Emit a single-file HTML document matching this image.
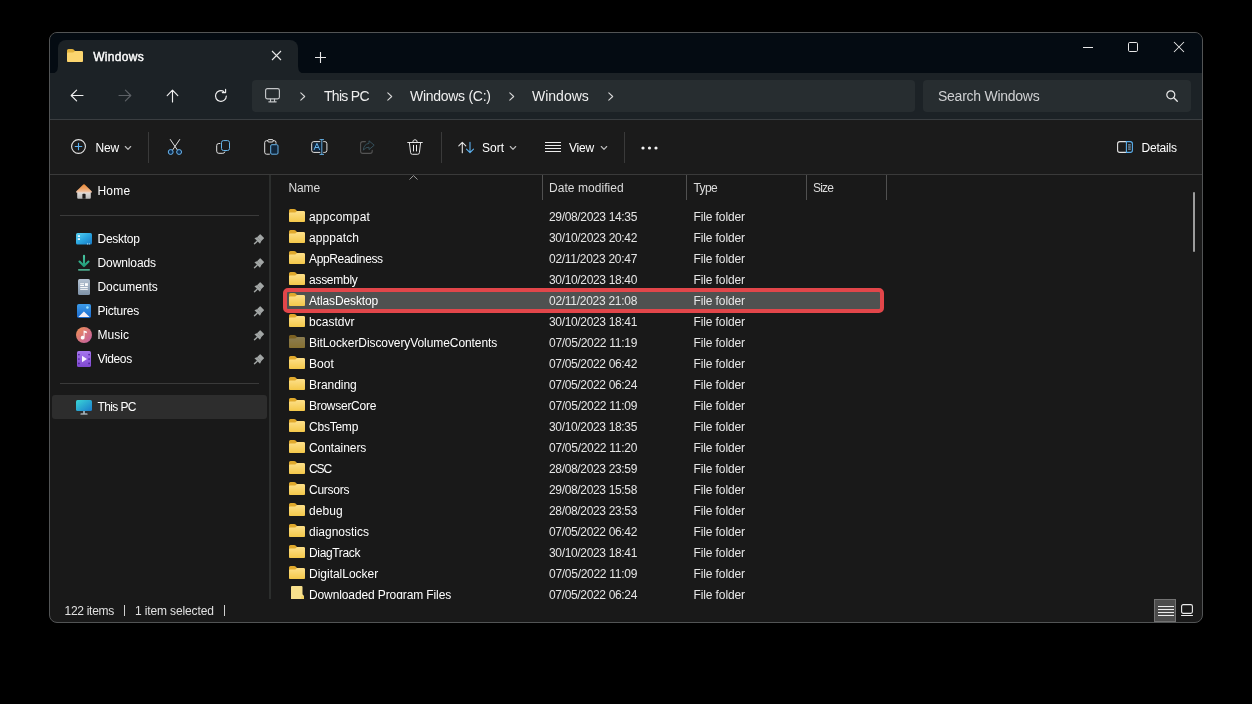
<!DOCTYPE html>
<html><head><meta charset="utf-8">
<style>
*{box-sizing:border-box;margin:0;padding:0}
html,body{width:1252px;height:704px;background:#000;overflow:hidden;font-family:"Liberation Sans",sans-serif;}
#win{position:absolute;left:49px;top:32px;width:1154px;height:591px;border:1px solid #525455;border-radius:8px;background:#191919;overflow:hidden}
#in{position:absolute;left:-50px;top:-33px;width:1252px;height:704px;will-change:transform}
.a{position:absolute}
.t{position:absolute;color:#fff;font-size:12px;white-space:nowrap;line-height:14px;height:14px}
svg{position:absolute;overflow:visible}
.row{position:absolute;left:0;height:21px;width:1252px}
</style></head><body>
<div id="win"><div id="in">
<!-- TITLE -->
<div class="a" style="left:50px;top:33px;width:1152px;height:41px;background:#040b12"></div>
<div class="a" style="left:58px;top:40px;width:240px;height:34px;background:#1c2226;border-radius:8px 8px 0 0"></div>

<!-- tab flare -->
<svg style="left:298px;top:66px" width="8" height="8"><path d="M0 8 L0 0 Q0 8 8 8 Z" fill="#1c2226"/></svg>
<svg style="left:50px;top:66px" width="8" height="8"><path d="M8 8 L8 0 Q8 8 0 8 Z" fill="#1c2226"/></svg>
<!-- tab folder icon -->
<svg style="left:67px;top:49px" width="16" height="13" viewBox="0 0 16 13"><path d="M0 1.5Q0 0 1.5 0H5.2Q6 0 6.6 .6L8 2H14.5Q16 2 16 3.5V11.5Q16 13 14.500 13H1.5Q0 13 0 11.5Z" fill="#e2b23c"/><path d="M0 4.500Q0 3.500 1 3.500H5.500Q6.300 3.500 6.900 3L8 2H14.500Q16 2 16 3.500V11.500Q16 13 14.500 13H1.500Q0 13 0 11.500Z" fill="#fbd56f"/></svg>
<div class="t" id="tabt" style="left:93.200px;top:50px;font-size:12px;-webkit-text-stroke:.4px #fff;letter-spacing:.3px">Windows</div>
<svg style="left:272px;top:51px" width="9" height="9" viewBox="0 0 9 9"><path d="M0 0L9 9M9 0L0 9" stroke="#e8e8e8" stroke-width="1.1" fill="none"/></svg>
<svg style="left:315px;top:52px" width="11" height="11" viewBox="0 0 11 11"><path d="M5.500 0V11M0 5.500H11" stroke="#e8e8e8" stroke-width="1.1" fill="none"/></svg>
<!-- window controls -->
<svg style="left:1083px;top:47px" width="10" height="1"><rect width="10" height="1" fill="#e8e8e8"/></svg>
<svg style="left:1128px;top:42px" width="10" height="10" viewBox="0 0 10 10"><rect x=".5" y=".5" width="9" height="9" rx="1.2" stroke="#e8e8e8" fill="none"/></svg>
<svg style="left:1174px;top:42px" width="10" height="10" viewBox="0 0 10 10"><path d="M0 0L10 10M10 0L0 10" stroke="#e8e8e8" stroke-width="1.05" fill="none"/></svg>
<!-- NAV -->
<div class="a" style="left:50px;top:73px;width:1152px;height:46px;background:#1c2226"></div>
<div class="a" style="left:50px;top:119px;width:1152px;height:1px;background:#3a3e41"></div>
<div class="a" style="left:252px;top:80px;width:663px;height:32px;background:#272d30;border-radius:4px"></div>
<div class="a" style="left:923px;top:80px;width:268px;height:32px;background:#272d30;border-radius:4px"></div>

<!-- nav icons -->
<svg style="left:70px;top:89px" width="14" height="13" viewBox="0 0 14 13"><path d="M13 6.500H1.400M6.600 1.200L1.200 6.500L6.600 11.800" stroke="#f0f0f0" stroke-width="1.15" fill="none" stroke-linecap="round" stroke-linejoin="round"/></svg>
<svg style="left:118px;top:89px" width="14" height="13" viewBox="0 0 14 13"><path d="M1 6.500H12.600M7.400 1.200L12.800 6.500L7.400 11.800" stroke="#5d6166" stroke-width="1.15" fill="none" stroke-linecap="round" stroke-linejoin="round"/></svg>
<svg style="left:166px;top:89px" width="13" height="14" viewBox="0 0 13 14"><path d="M6.500 13V1.400M1.200 6.600L6.500 1.200L11.800 6.600" stroke="#f0f0f0" stroke-width="1.15" fill="none" stroke-linecap="round" stroke-linejoin="round"/></svg>
<svg style="left:214px;top:89px" width="14" height="14" viewBox="0 0 14 14"><path d="M12.300 7A5.400 5.400 0 1 1 9.800 2.450" stroke="#f0f0f0" stroke-width="1.15" fill="none" stroke-linecap="round"/><path d="M8.300 3.600H11.600V.4" stroke="#f0f0f0" stroke-width="1.15" fill="none" stroke-linecap="round" stroke-linejoin="round"/></svg>
<!-- monitor -->
<svg style="left:265px;top:88px" width="15" height="15" viewBox="0 0 15 15"><rect x=".6" y=".6" width="13.800" height="10.300" rx="1.800" stroke="#c4c6c8" stroke-width="1.150" fill="none"/><path d="M5.500 11V13.500M9.500 11V13.500M3.800 13.800H11.200" stroke="#c4c6c8" stroke-width="1.150" fill="none" stroke-linecap="round"/></svg>
<svg class="chev" style="left:299.500px;top:92px" width="6" height="9" viewBox="0 0 6 9"><path d="M.8 .9L4.700 4.500L.8 8.100" stroke="#d8d8d8" stroke-width="1.100" fill="none" stroke-linecap="round" stroke-linejoin="round"/></svg>
<div class="t" id="bc1" style="left:324px;top:87.600px;font-size:14px;line-height:16px;height:16px;color:#efefef;letter-spacing:-0.71px">This PC</div>
<svg class="chev" style="left:386.500px;top:92px" width="6" height="9" viewBox="0 0 6 9"><path d="M.8 .9L4.700 4.500L.8 8.100" stroke="#d8d8d8" stroke-width="1.100" fill="none" stroke-linecap="round" stroke-linejoin="round"/></svg>
<div class="t" id="bc2" style="left:410px;top:87.600px;font-size:14px;line-height:16px;height:16px;color:#efefef;letter-spacing:-0.28px">Windows (C:)</div>
<svg class="chev" style="left:508.500px;top:92px" width="6" height="9" viewBox="0 0 6 9"><path d="M.8 .9L4.700 4.500L.8 8.100" stroke="#d8d8d8" stroke-width="1.100" fill="none" stroke-linecap="round" stroke-linejoin="round"/></svg>
<div class="t" id="bc3" style="left:532px;top:87.600px;font-size:14px;line-height:16px;height:16px;color:#efefef;letter-spacing:0.0px">Windows</div>
<svg class="chev" style="left:607.500px;top:92px" width="6" height="9" viewBox="0 0 6 9"><path d="M.8 .9L4.700 4.500L.8 8.100" stroke="#d8d8d8" stroke-width="1.100" fill="none" stroke-linecap="round" stroke-linejoin="round"/></svg>
<div class="t" id="srch" style="left:938px;top:87.600px;font-size:14px;line-height:16px;height:16px;color:#cfd0d2;letter-spacing:-0.26px">Search Windows</div>
<svg style="left:1166px;top:90px" width="12" height="12" viewBox="0 0 12 12"><circle cx="4.800" cy="4.800" r="4" stroke="#e8e8e8" stroke-width="1.200" fill="none"/><path d="M7.800 7.800L11.300 11.300" stroke="#e8e8e8" stroke-width="1.300" stroke-linecap="round"/></svg>
<!-- TOOLBAR -->
<div class="a" style="left:50px;top:120px;width:1152px;height:54px;background:#1b1b1b"></div>
<div class="a" style="left:50px;top:174px;width:1152px;height:1px;background:#3a3a3a"></div>

<!-- toolbar icons -->
<svg style="left:71px;top:139px" width="15" height="15" viewBox="0 0 15 15"><circle cx="7.500" cy="7.500" r="6.900" stroke="#e4e4e4" stroke-width="1.100" fill="none"/><path d="M7.500 4.200V10.800M4.200 7.500H10.800" stroke="#5cb0ee" stroke-width="1.100" stroke-linecap="round"/></svg>
<div class="t" id="tnew" style="left:95.500px;top:141px;letter-spacing:-0.17px">New</div>
<svg style="left:125px;top:145.600px" width="6" height="4" viewBox="0 0 6 4"><path d="M.3 .5L3 3.300L5.700 .5" stroke="#bcbcbc" stroke-width="1.150" fill="none" stroke-linecap="round" stroke-linejoin="round"/></svg>
<div class="a" style="left:148px;top:132px;width:1px;height:31px;background:#3a3a3a"></div>
<!-- cut -->
<svg style="left:167px;top:139px" width="16" height="16" viewBox="0 0 16 16"><path d="M3.300 .5L10.400 11M12.700 .5L5.600 11" stroke="#e4e4e4" stroke-width="1" fill="none" stroke-linecap="round"/><circle cx="3.700" cy="13" r="2.450" stroke="#6cb4ea" stroke-width="1" fill="#0a2e54"/><circle cx="12.100" cy="13" r="2.450" stroke="#6cb4ea" stroke-width="1" fill="#0a2e54"/></svg>
<!-- copy -->
<svg style="left:216px;top:140px" width="15" height="15" viewBox="0 0 15 15"><path d="M3.900 3.500H2.800Q.7 3.500 .7 5.600V11.200Q.7 13.300 2.800 13.300H6.800Q8.600 13.300 8.900 11.900" stroke="#e4e4e4" stroke-width="1" fill="none" stroke-linecap="round"/><rect x="5.500" y=".6" width="8" height="9.900" rx="2" stroke="#66b4e8" stroke-width="1" fill="none"/></svg>
<!-- paste -->
<svg style="left:263.500px;top:139px" width="15" height="16" viewBox="0 0 15 16"><path d="M5.400 15.200H2.600Q.7 15.200 .7 13.300V3.600Q.7 1.700 2.600 1.700H3.600M9.400 1.700H10.200Q12 1.700 12 3.500V4.400" stroke="#e4e4e4" stroke-width="1" fill="none" stroke-linecap="round"/><rect x="3.700" y=".6" width="5.600" height="2.400" rx="1.200" stroke="#e4e4e4" stroke-width="1" fill="none"/><rect x="6.700" y="5.700" width="7.300" height="9.500" rx="1.200" stroke="#66b2e8" stroke-width="1" fill="#10253a"/></svg>
<!-- rename -->
<svg style="left:310.500px;top:139px" width="17" height="16" viewBox="0 0 17 16"><rect x="1.800" y="3.600" width="8.400" height="8.800" rx="1.500" fill="#10243a"/><path d="M8.900 2.600H2.800Q.7 2.600 .7 4.700V11.300Q.7 13.400 2.800 13.400H8.900M12.700 2.600H13.800Q15.900 2.600 15.900 4.700V11.300Q15.900 13.400 13.800 13.400H12.700" stroke="#e4e4e4" stroke-width="1" fill="none" stroke-linecap="round"/><path d="M10.800 .7V15.300M9 .6H12.600M9 15.400H12.600" stroke="#66b2e8" stroke-width=".95" fill="none" stroke-linecap="round"/><path d="M3.200 10.600L5.900 4.400L8.600 10.600M4.200 8.500H7.600" stroke="#66b2e8" stroke-width="1" fill="none" stroke-linecap="round" stroke-linejoin="round"/></svg>
<!-- share (disabled) -->
<svg style="left:360px;top:139.500px" width="15" height="14" viewBox="0 0 15 14"><path d="M5.400 1.600H2.800Q.6 1.600 .6 3.800V11.200Q.6 13.400 2.800 13.400H10Q12.200 13.400 12.200 11.200V10.400" stroke="#545454" stroke-width="1.100" fill="none" stroke-linecap="round"/><path d="M9 .8L14.200 5.200L9 9.600V7.200Q5.200 7 3.400 10.200Q3.600 4.200 9 3.400Z" stroke="#36525e" stroke-width=".95" fill="none" stroke-linejoin="round"/></svg>
<!-- delete -->
<svg style="left:407px;top:139px" width="16" height="16" viewBox="0 0 16 16"><path d="M.7 3.500H15.300M5.700 3.300Q5.700 .7 8 .7Q10.300 .7 10.300 3.300M2.400 3.700L3.600 13.700Q3.800 15.300 5.400 15.300H10.600Q12.200 15.300 12.400 13.700L13.600 3.700" stroke="#e4e4e4" stroke-width="1" fill="none" stroke-linecap="round" stroke-linejoin="round"/><path d="M6.500 6.300V12M9.500 6.300V12" stroke="#f4f4f4" stroke-width="1" fill="none" stroke-linecap="round"/></svg>
<div class="a" style="left:441px;top:132px;width:1px;height:31px;background:#3a3a3a"></div>
<!-- sort -->
<svg style="left:458px;top:140.500px" width="16" height="13" viewBox="0 0 16 13"><path d="M4.300 11.800V1.500M.8 4.800L4.300 1.300L7.800 4.800" stroke="#e4e4e4" stroke-width="1.100" fill="none" stroke-linecap="round" stroke-linejoin="round"/><path d="M12 1.200V11.500M8.500 8.200L12 11.700L15.500 8.200" stroke="#5cb0ee" stroke-width="1.100" fill="none" stroke-linecap="round" stroke-linejoin="round"/></svg>
<div class="t" id="tsort" style="left:482px;top:141px;letter-spacing:-0.0px">Sort</div>
<svg style="left:510px;top:145.600px" width="6" height="4" viewBox="0 0 6 4"><path d="M.3 .5L3 3.300L5.700 .5" stroke="#bcbcbc" stroke-width="1.150" fill="none" stroke-linecap="round" stroke-linejoin="round"/></svg>
<!-- view -->
<svg style="left:545px;top:142px" width="16" height="11" viewBox="0 0 16 11"><path d="M0 .5H16M0 3.500H16M0 6.500H16M0 9.500H16" stroke="#ededed" stroke-width="1" fill="none"/></svg>
<div class="t" id="tview" style="left:569px;top:141px;letter-spacing:-0.2px">View</div>
<svg style="left:601px;top:145.600px" width="6" height="4" viewBox="0 0 6 4"><path d="M.3 .5L3 3.300L5.700 .5" stroke="#bcbcbc" stroke-width="1.150" fill="none" stroke-linecap="round" stroke-linejoin="round"/></svg>
<div class="a" style="left:624px;top:132px;width:1px;height:31px;background:#3a3a3a"></div>
<svg style="left:640.600px;top:146px" width="17" height="4" viewBox="0 0 17 4"><circle cx="2" cy="2" r="1.600" fill="#f2f2f2"/><circle cx="8.500" cy="2" r="1.600" fill="#f2f2f2"/><circle cx="15" cy="2" r="1.600" fill="#f2f2f2"/></svg>
<!-- details -->
<svg style="left:1117px;top:141px" width="16" height="12" viewBox="0 0 16 12"><path d="M9.400 .6H2.800Q.6 .6 .6 2.800V9.200Q.6 11.400 2.800 11.400H9.400" stroke="#e4e4e4" stroke-width="1.100" fill="none"/><path d="M9.400 .6H13.200Q15.400 .6 15.400 2.800V9.200Q15.400 11.400 13.200 11.400H9.400Z" stroke="#5cb0ee" stroke-width="1.100" fill="none"/><path d="M11.100 3.900H13.800M11.100 6H13.800M11.100 8.100H13.800" stroke="#a4d0f2" stroke-width=".9" fill="none"/></svg>
<div class="t" id="tdet" style="left:1141.500px;top:141px;letter-spacing:-0.21px">Details</div>

<!-- SIDEBAR -->
<div class="a" style="left:269px;top:175px;width:1.500px;height:424px;background:#2c2e2d"></div>
<div class="a" style="left:60px;top:215px;width:199px;height:1px;background:#3a3a3a"></div>
<div class="a" style="left:60px;top:383px;width:199px;height:1px;background:#3a3a3a"></div>
<div class="a" style="left:52px;top:395px;width:215px;height:24px;background:#2d2d2d;border-radius:3px"></div>
<!-- home -->
<svg style="left:76px;top:184px" width="16" height="15" viewBox="0 0 16 15"><defs><linearGradient id="gh" x1="0" y1="0" x2="0" y2="1"><stop offset="0" stop-color="#e88a38"/><stop offset=".55" stop-color="#eea468"/><stop offset="1" stop-color="#f0cdb8"/></linearGradient><linearGradient id="gw" x1="0" y1="0" x2="0" y2="1"><stop offset="0" stop-color="#e6e2e0"/><stop offset="1" stop-color="#b8b8b8"/></linearGradient></defs><path d="M1.200 7.500H14.800V13.800Q14.800 14.800 13.800 14.800H2.200Q1.200 14.800 1.200 13.800Z" fill="url(#gw)"/><path d="M6.400 14.800V10.600Q6.400 9.800 7.200 9.800H8.800Q9.600 9.800 9.600 10.600V14.800Z" fill="#1e1c1c"/><path d="M.3 7.200L7.300 .5Q8 0 8.700 .5L15.700 7.200Q16.200 7.900 15.600 8.500Q15.200 8.800 14.600 8.600H1.400Q.8 8.800 .4 8.500Q-.2 7.900 .3 7.200Z" fill="url(#gh)"/></svg>
<div class="t" id="s0" style="left:97.500px;top:184px;letter-spacing:0.2px">Home</div>
<!-- desktop -->
<svg style="left:76px;top:233px" width="16" height="12" viewBox="0 0 16 12"><defs><linearGradient id="gd" x1="0" y1="0" x2="1" y2="1"><stop offset="0" stop-color="#58d2f2"/><stop offset=".5" stop-color="#2aa6e0"/><stop offset="1" stop-color="#1878c4"/></linearGradient></defs><rect width="16" height="11.600" rx="1.500" fill="url(#gd)"/><rect x="1.800" y="2.200" width="2.200" height="1.800" fill="#e4f8ff"/><rect x="1.800" y="5.200" width="2.200" height="1.800" fill="#e4f8ff"/><rect x="11" y="10.400" width="1" height="1" fill="#bfe8fa"/><rect x="12.800" y="10.400" width="1" height="1" fill="#bfe8fa"/></svg>
<div class="t" id="s1" style="left:97.500px;top:232px;letter-spacing:-0.28px">Desktop</div>
<!-- downloads -->
<svg style="left:78px;top:255px" width="12" height="16" viewBox="0 0 12 16"><defs><linearGradient id="gdl" x1="0" y1="0" x2="0" y2="1"><stop offset="0" stop-color="#48c4a0"/><stop offset="1" stop-color="#1f9c78"/></linearGradient></defs><path d="M6 .9V10.400M1.500 6.600L6 11.100L10.500 6.600" stroke="url(#gdl)" stroke-width="2.100" fill="none" stroke-linecap="round" stroke-linejoin="round"/><rect x="0" y="14" width="12" height="1.800" rx=".8" fill="#4aa88a"/></svg>
<div class="t" id="s2" style="left:97.500px;top:256px;letter-spacing:-0.1px">Downloads</div>
<!-- documents -->
<svg style="left:78px;top:279px" width="12" height="16" viewBox="0 0 12 16"><defs><linearGradient id="gdoc" x1="0" y1="0" x2="0" y2="1"><stop offset="0" stop-color="#b4c2d2"/><stop offset="1" stop-color="#7e92a8"/></linearGradient></defs><rect width="12" height="16" rx="1.500" fill="url(#gdoc)"/><path d="M2.200 4.800H6M2.200 6.500H6M2.200 8.400H9.800M2.200 10.300H9.800" stroke="#fff" stroke-width="1"/><rect x="7" y="4.200" width="2.900" height="2.700" fill="#fff"/></svg>
<div class="t" id="s3" style="left:97.500px;top:280px;letter-spacing:-0.06px">Documents</div>
<!-- pictures -->
<svg style="left:77px;top:304px" width="14" height="14" viewBox="0 0 14 14"><defs><linearGradient id="gp" x1="0" y1="0" x2="0" y2="1"><stop offset="0" stop-color="#3c9cea"/><stop offset="1" stop-color="#1a68cc"/></linearGradient></defs><rect width="14" height="14" rx="1.800" fill="url(#gp)"/><circle cx="10.400" cy="3.500" r="1.250" fill="#9fe4ff"/><path d="M1.400 13L6.900 7.600L12.600 13Z" fill="#f4eef6"/></svg>
<div class="t" id="s4" style="left:97.500px;top:304px;letter-spacing:-0.23px">Pictures</div>
<!-- music -->
<svg style="left:76px;top:327px" width="16" height="16" viewBox="0 0 16 16"><defs><linearGradient id="gm" x1="0" y1="0" x2="1" y2="1"><stop offset="0" stop-color="#f09050"/><stop offset="1" stop-color="#c05ca8"/></linearGradient></defs><circle cx="8" cy="8" r="8" fill="url(#gm)"/><path d="M7.600 3.600L10.800 4.600V6.200L8.600 5.600V10.600A1.900 1.900 0 1 1 7.600 9Z" fill="#fff"/></svg>
<div class="t" id="s5" style="left:97.500px;top:328px;letter-spacing:0.03px">Music</div>
<!-- videos -->
<svg style="left:77px;top:351px" width="14" height="16" viewBox="0 0 14 16"><defs><linearGradient id="gv" x1="0" y1="0" x2="0" y2="1"><stop offset="0" stop-color="#a676ee"/><stop offset="1" stop-color="#8048d0"/></linearGradient></defs><rect width="14" height="16" rx="1.600" fill="url(#gv)"/><path d="M5 4.800L10 8L5 11.200Z" fill="#f6f0ff"/><circle cx="1.9" cy="3.6" r=".85" fill="#4c249a"/><circle cx="1.9" cy="8" r=".85" fill="#4c249a"/><circle cx="1.9" cy="12.4" r=".85" fill="#4c249a"/><circle cx="12.1" cy="3.6" r=".85" fill="#4c249a"/><circle cx="12.1" cy="8" r=".85" fill="#4c249a"/><circle cx="12.1" cy="12.4" r=".85" fill="#4c249a"/></svg>
<div class="t" id="s6" style="left:97.500px;top:352px;letter-spacing:-0.36px">Videos</div>
<!-- this pc -->
<svg style="left:76px;top:400px" width="16" height="15" viewBox="0 0 16 15"><defs><linearGradient id="gpc" x1="0" y1="0" x2="1" y2="1"><stop offset="0" stop-color="#3ad6d6"/><stop offset="1" stop-color="#1a7ccc"/></linearGradient></defs><rect width="16" height="11" rx="1.500" fill="url(#gpc)"/><rect x="7.300" y="11" width="1.400" height="2.600" fill="#b8d4e6"/><rect x="4.400" y="13.400" width="7.200" height="1.200" rx=".6" fill="#dfe9f0"/></svg>
<div class="t" id="s7" style="left:97.500px;top:400px;letter-spacing:-0.61px">This PC</div>
<!-- pins -->
<svg style="left:253px;top:233.5px" width="12" height="13" viewBox="0 0 12 13"><g transform="translate(4.500,6.800) rotate(45)" fill="#a2a6a5"><rect x="-2.900" y="-6.700" width="5.800" height="4.400" rx=".6"/><path d="M-2.900 -2.600L-3.900 0.400H3.900L2.900 -2.600Z"/><rect x="-.7" y="0" width="1.400" height="4.800" rx=".5"/></g></svg>
<svg style="left:253px;top:257.5px" width="12" height="13" viewBox="0 0 12 13"><g transform="translate(4.500,6.800) rotate(45)" fill="#a2a6a5"><rect x="-2.900" y="-6.700" width="5.800" height="4.400" rx=".6"/><path d="M-2.900 -2.600L-3.900 0.400H3.900L2.900 -2.600Z"/><rect x="-.7" y="0" width="1.400" height="4.800" rx=".5"/></g></svg>
<svg style="left:253px;top:281.5px" width="12" height="13" viewBox="0 0 12 13"><g transform="translate(4.500,6.800) rotate(45)" fill="#a2a6a5"><rect x="-2.900" y="-6.700" width="5.800" height="4.400" rx=".6"/><path d="M-2.900 -2.600L-3.900 0.400H3.900L2.900 -2.600Z"/><rect x="-.7" y="0" width="1.400" height="4.800" rx=".5"/></g></svg>
<svg style="left:253px;top:305.5px" width="12" height="13" viewBox="0 0 12 13"><g transform="translate(4.500,6.800) rotate(45)" fill="#a2a6a5"><rect x="-2.900" y="-6.700" width="5.800" height="4.400" rx=".6"/><path d="M-2.900 -2.600L-3.900 0.400H3.900L2.900 -2.600Z"/><rect x="-.7" y="0" width="1.400" height="4.800" rx=".5"/></g></svg>
<svg style="left:253px;top:329.5px" width="12" height="13" viewBox="0 0 12 13"><g transform="translate(4.500,6.800) rotate(45)" fill="#a2a6a5"><rect x="-2.900" y="-6.700" width="5.800" height="4.400" rx=".6"/><path d="M-2.900 -2.600L-3.900 0.400H3.900L2.900 -2.600Z"/><rect x="-.7" y="0" width="1.400" height="4.800" rx=".5"/></g></svg>
<svg style="left:253px;top:353.5px" width="12" height="13" viewBox="0 0 12 13"><g transform="translate(4.500,6.800) rotate(45)" fill="#a2a6a5"><rect x="-2.900" y="-6.700" width="5.800" height="4.400" rx=".6"/><path d="M-2.900 -2.600L-3.900 0.400H3.900L2.900 -2.600Z"/><rect x="-.7" y="0" width="1.400" height="4.800" rx=".5"/></g></svg>

<!-- FILE LIST -->
<svg width="0" height="0" style="left:0;top:0"><defs><linearGradient id="gf" x1="0" y1="0" x2="0" y2="1"><stop offset="0" stop-color="#fde08a"/><stop offset="1" stop-color="#f4c84a"/></linearGradient></defs></svg>
<div id="list" class="a" style="left:270px;top:175px;width:932px;height:424px;overflow:hidden"><div class="a" style="left:-270px;top:-175px;width:1252px;height:704px">
<div class="t" id="h0" style="left:288.500px;top:181px;color:#dcdcdc;letter-spacing:-0.13px">Name</div>
<div class="t" id="h1" style="left:549px;top:181px;color:#dcdcdc;letter-spacing:0.05px">Date modified</div>
<div class="t" id="h2" style="left:693.500px;top:181px;color:#dcdcdc;letter-spacing:-0.63px">Type</div>
<div class="t" id="h3" style="left:813px;top:181px;color:#dcdcdc;letter-spacing:-0.84px">Size</div>
<svg style="left:408.500px;top:175px" width="9" height="5" viewBox="0 0 9 5"><path d="M.5 4.500L4.500 .6L8.500 4.500" stroke="#9a9a9a" stroke-width="1" fill="none"/></svg>
<div class="a" style="left:542px;top:175px;width:1px;height:25px;background:#505050"></div>
<div class="a" style="left:686px;top:175px;width:1px;height:25px;background:#505050"></div>
<div class="a" style="left:806px;top:175px;width:1px;height:25px;background:#505050"></div>
<div class="a" style="left:886px;top:175px;width:1px;height:25px;background:#505050"></div>
<div class="a" style="left:283px;top:288px;width:601px;height:25px;border:4px solid #e2464a;border-radius:5px;background:#4f5150"></div>
<svg style="left:289px;top:209px" width="16" height="13" viewBox="0 0 16 13"><path d="M0 1.500Q0 0 1.500 0H5.200Q6 0 6.600 .6L8 2H14.500Q16 2 16 3.500V11.500Q16 13 14.500 13H1.500Q0 13 0 11.500Z" fill="#e0a92c"/><path d="M0 4.500Q0 3.500 1 3.500H5.500Q6.300 3.500 6.900 3L8 2H14.500Q16 2 16 3.500V11.500Q16 13 14.500 13H1.500Q0 13 0 11.500Z" fill="url(#gf)"/></svg>
<div class="t" id="n0" style="left:309px;top:210px;letter-spacing:0.18px">appcompat</div><div class="t" id="d0" style="left:549px;top:210px;color:#e6e6e6;letter-spacing:-0.34px">29/08/2023 14:35</div><div class="t" id="f0" style="left:693.500px;top:210px;color:#e6e6e6;letter-spacing:-0.11px">File folder</div>
<svg style="left:289px;top:230px" width="16" height="13" viewBox="0 0 16 13"><path d="M0 1.500Q0 0 1.500 0H5.200Q6 0 6.600 .6L8 2H14.500Q16 2 16 3.500V11.500Q16 13 14.500 13H1.500Q0 13 0 11.500Z" fill="#e0a92c"/><path d="M0 4.500Q0 3.500 1 3.500H5.500Q6.300 3.500 6.900 3L8 2H14.500Q16 2 16 3.500V11.500Q16 13 14.500 13H1.500Q0 13 0 11.500Z" fill="url(#gf)"/></svg>
<div class="t" id="n1" style="left:309px;top:231px;letter-spacing:0.08px">apppatch</div><div class="t" id="d1" style="left:549px;top:231px;color:#e6e6e6;letter-spacing:-0.34px">30/10/2023 20:42</div><div class="t" id="f1" style="left:693.500px;top:231px;color:#e6e6e6;letter-spacing:-0.11px">File folder</div>
<svg style="left:289px;top:251px" width="16" height="13" viewBox="0 0 16 13"><path d="M0 1.500Q0 0 1.500 0H5.200Q6 0 6.600 .6L8 2H14.500Q16 2 16 3.500V11.500Q16 13 14.500 13H1.500Q0 13 0 11.500Z" fill="#e0a92c"/><path d="M0 4.500Q0 3.500 1 3.500H5.500Q6.300 3.500 6.900 3L8 2H14.500Q16 2 16 3.500V11.500Q16 13 14.500 13H1.500Q0 13 0 11.500Z" fill="url(#gf)"/></svg>
<div class="t" id="n2" style="left:309px;top:252px;letter-spacing:-0.36px">AppReadiness</div><div class="t" id="d2" style="left:549px;top:252px;color:#e6e6e6;letter-spacing:-0.28px">02/11/2023 20:47</div><div class="t" id="f2" style="left:693.500px;top:252px;color:#e6e6e6;letter-spacing:-0.11px">File folder</div>
<svg style="left:289px;top:272px" width="16" height="13" viewBox="0 0 16 13"><path d="M0 1.500Q0 0 1.500 0H5.200Q6 0 6.600 .6L8 2H14.500Q16 2 16 3.500V11.500Q16 13 14.500 13H1.500Q0 13 0 11.500Z" fill="#e0a92c"/><path d="M0 4.500Q0 3.500 1 3.500H5.500Q6.300 3.500 6.900 3L8 2H14.500Q16 2 16 3.500V11.500Q16 13 14.500 13H1.500Q0 13 0 11.500Z" fill="url(#gf)"/></svg>
<div class="t" id="n3" style="left:309px;top:273px;letter-spacing:-0.27px">assembly</div><div class="t" id="d3" style="left:549px;top:273px;color:#e6e6e6;letter-spacing:-0.34px">30/10/2023 18:40</div><div class="t" id="f3" style="left:693.500px;top:273px;color:#e6e6e6;letter-spacing:-0.11px">File folder</div>
<svg style="left:289px;top:293px" width="16" height="13" viewBox="0 0 16 13"><path d="M0 1.500Q0 0 1.500 0H5.200Q6 0 6.600 .6L8 2H14.500Q16 2 16 3.500V11.500Q16 13 14.500 13H1.500Q0 13 0 11.500Z" fill="#e0a92c"/><path d="M0 4.500Q0 3.500 1 3.500H5.500Q6.300 3.500 6.900 3L8 2H14.500Q16 2 16 3.500V11.500Q16 13 14.500 13H1.500Q0 13 0 11.500Z" fill="url(#gf)"/></svg>
<div class="t" id="n4" style="left:309px;top:294px;letter-spacing:-0.14px">AtlasDesktop</div><div class="t" id="d4" style="left:549px;top:294px;color:#e6e6e6;letter-spacing:-0.28px">02/11/2023 21:08</div><div class="t" id="f4" style="left:693.500px;top:294px;color:#e6e6e6;letter-spacing:-0.11px">File folder</div>
<svg style="left:289px;top:314px" width="16" height="13" viewBox="0 0 16 13"><path d="M0 1.500Q0 0 1.500 0H5.200Q6 0 6.600 .6L8 2H14.500Q16 2 16 3.500V11.500Q16 13 14.500 13H1.500Q0 13 0 11.500Z" fill="#e0a92c"/><path d="M0 4.500Q0 3.500 1 3.500H5.500Q6.300 3.500 6.900 3L8 2H14.500Q16 2 16 3.500V11.500Q16 13 14.500 13H1.500Q0 13 0 11.500Z" fill="url(#gf)"/></svg>
<div class="t" id="n5" style="left:309px;top:315px;letter-spacing:0.01px">bcastdvr</div><div class="t" id="d5" style="left:549px;top:315px;color:#e6e6e6;letter-spacing:-0.34px">30/10/2023 18:41</div><div class="t" id="f5" style="left:693.500px;top:315px;color:#e6e6e6;letter-spacing:-0.11px">File folder</div>
<svg style="left:289px;top:335px" width="16" height="13" viewBox="0 0 16 13" opacity=".5"><path d="M0 1.500Q0 0 1.500 0H5.200Q6 0 6.600 .6L8 2H14.500Q16 2 16 3.500V11.500Q16 13 14.500 13H1.500Q0 13 0 11.500Z" fill="#e0a92c"/><path d="M0 4.500Q0 3.500 1 3.500H5.500Q6.300 3.500 6.900 3L8 2H14.500Q16 2 16 3.500V11.500Q16 13 14.500 13H1.500Q0 13 0 11.500Z" fill="url(#gf)"/></svg>
<div class="t" id="n6" style="left:309px;top:336px;letter-spacing:-0.08px">BitLockerDiscoveryVolumeContents</div><div class="t" id="d6" style="left:549px;top:336px;color:#e6e6e6;letter-spacing:-0.28px">07/05/2022 11:19</div><div class="t" id="f6" style="left:693.500px;top:336px;color:#e6e6e6;letter-spacing:-0.11px">File folder</div>
<svg style="left:289px;top:356px" width="16" height="13" viewBox="0 0 16 13"><path d="M0 1.500Q0 0 1.500 0H5.200Q6 0 6.600 .6L8 2H14.500Q16 2 16 3.500V11.500Q16 13 14.500 13H1.500Q0 13 0 11.500Z" fill="#e0a92c"/><path d="M0 4.500Q0 3.500 1 3.500H5.500Q6.300 3.500 6.900 3L8 2H14.500Q16 2 16 3.500V11.500Q16 13 14.500 13H1.500Q0 13 0 11.500Z" fill="url(#gf)"/></svg>
<div class="t" id="n7" style="left:309px;top:357px;letter-spacing:0.08px">Boot</div><div class="t" id="d7" style="left:549px;top:357px;color:#e6e6e6;letter-spacing:-0.34px">07/05/2022 06:42</div><div class="t" id="f7" style="left:693.500px;top:357px;color:#e6e6e6;letter-spacing:-0.11px">File folder</div>
<svg style="left:289px;top:377px" width="16" height="13" viewBox="0 0 16 13"><path d="M0 1.500Q0 0 1.500 0H5.200Q6 0 6.600 .6L8 2H14.500Q16 2 16 3.500V11.500Q16 13 14.500 13H1.500Q0 13 0 11.500Z" fill="#e0a92c"/><path d="M0 4.500Q0 3.500 1 3.500H5.500Q6.300 3.500 6.900 3L8 2H14.500Q16 2 16 3.500V11.500Q16 13 14.500 13H1.500Q0 13 0 11.500Z" fill="url(#gf)"/></svg>
<div class="t" id="n8" style="left:309px;top:378px;letter-spacing:-0.04px">Branding</div><div class="t" id="d8" style="left:549px;top:378px;color:#e6e6e6;letter-spacing:-0.34px">07/05/2022 06:24</div><div class="t" id="f8" style="left:693.500px;top:378px;color:#e6e6e6;letter-spacing:-0.11px">File folder</div>
<svg style="left:289px;top:398px" width="16" height="13" viewBox="0 0 16 13"><path d="M0 1.500Q0 0 1.500 0H5.200Q6 0 6.600 .6L8 2H14.500Q16 2 16 3.500V11.500Q16 13 14.500 13H1.500Q0 13 0 11.500Z" fill="#e0a92c"/><path d="M0 4.500Q0 3.500 1 3.500H5.500Q6.300 3.500 6.900 3L8 2H14.500Q16 2 16 3.500V11.500Q16 13 14.500 13H1.500Q0 13 0 11.500Z" fill="url(#gf)"/></svg>
<div class="t" id="n9" style="left:309px;top:399px;letter-spacing:-0.27px">BrowserCore</div><div class="t" id="d9" style="left:549px;top:399px;color:#e6e6e6;letter-spacing:-0.28px">07/05/2022 11:09</div><div class="t" id="f9" style="left:693.500px;top:399px;color:#e6e6e6;letter-spacing:-0.11px">File folder</div>
<svg style="left:289px;top:419px" width="16" height="13" viewBox="0 0 16 13"><path d="M0 1.500Q0 0 1.500 0H5.200Q6 0 6.600 .6L8 2H14.500Q16 2 16 3.500V11.500Q16 13 14.500 13H1.500Q0 13 0 11.500Z" fill="#e0a92c"/><path d="M0 4.500Q0 3.500 1 3.500H5.500Q6.300 3.500 6.900 3L8 2H14.500Q16 2 16 3.500V11.500Q16 13 14.500 13H1.500Q0 13 0 11.500Z" fill="url(#gf)"/></svg>
<div class="t" id="n10" style="left:309px;top:420px;letter-spacing:-0.23px">CbsTemp</div><div class="t" id="d10" style="left:549px;top:420px;color:#e6e6e6;letter-spacing:-0.34px">30/10/2023 18:35</div><div class="t" id="f10" style="left:693.500px;top:420px;color:#e6e6e6;letter-spacing:-0.11px">File folder</div>
<svg style="left:289px;top:440px" width="16" height="13" viewBox="0 0 16 13"><path d="M0 1.500Q0 0 1.500 0H5.200Q6 0 6.600 .6L8 2H14.500Q16 2 16 3.500V11.500Q16 13 14.500 13H1.500Q0 13 0 11.500Z" fill="#e0a92c"/><path d="M0 4.500Q0 3.500 1 3.500H5.500Q6.300 3.500 6.900 3L8 2H14.500Q16 2 16 3.500V11.500Q16 13 14.500 13H1.500Q0 13 0 11.500Z" fill="url(#gf)"/></svg>
<div class="t" id="n11" style="left:309px;top:441px;letter-spacing:-0.08px">Containers</div><div class="t" id="d11" style="left:549px;top:441px;color:#e6e6e6;letter-spacing:-0.28px">07/05/2022 11:20</div><div class="t" id="f11" style="left:693.500px;top:441px;color:#e6e6e6;letter-spacing:-0.11px">File folder</div>
<svg style="left:289px;top:461px" width="16" height="13" viewBox="0 0 16 13"><path d="M0 1.500Q0 0 1.500 0H5.200Q6 0 6.600 .6L8 2H14.500Q16 2 16 3.500V11.500Q16 13 14.500 13H1.500Q0 13 0 11.500Z" fill="#e0a92c"/><path d="M0 4.500Q0 3.500 1 3.500H5.500Q6.300 3.500 6.900 3L8 2H14.500Q16 2 16 3.500V11.500Q16 13 14.500 13H1.500Q0 13 0 11.500Z" fill="url(#gf)"/></svg>
<div class="t" id="n12" style="left:309px;top:462px;letter-spacing:-1.11px">CSC</div><div class="t" id="d12" style="left:549px;top:462px;color:#e6e6e6;letter-spacing:-0.34px">28/08/2023 23:59</div><div class="t" id="f12" style="left:693.500px;top:462px;color:#e6e6e6;letter-spacing:-0.11px">File folder</div>
<svg style="left:289px;top:482px" width="16" height="13" viewBox="0 0 16 13"><path d="M0 1.500Q0 0 1.500 0H5.200Q6 0 6.600 .6L8 2H14.500Q16 2 16 3.500V11.500Q16 13 14.500 13H1.500Q0 13 0 11.500Z" fill="#e0a92c"/><path d="M0 4.500Q0 3.500 1 3.500H5.500Q6.300 3.500 6.900 3L8 2H14.500Q16 2 16 3.500V11.500Q16 13 14.500 13H1.500Q0 13 0 11.500Z" fill="url(#gf)"/></svg>
<div class="t" id="n13" style="left:309px;top:483px;letter-spacing:-0.25px">Cursors</div><div class="t" id="d13" style="left:549px;top:483px;color:#e6e6e6;letter-spacing:-0.34px">29/08/2023 15:58</div><div class="t" id="f13" style="left:693.500px;top:483px;color:#e6e6e6;letter-spacing:-0.11px">File folder</div>
<svg style="left:289px;top:503px" width="16" height="13" viewBox="0 0 16 13"><path d="M0 1.500Q0 0 1.500 0H5.200Q6 0 6.600 .6L8 2H14.500Q16 2 16 3.500V11.500Q16 13 14.500 13H1.500Q0 13 0 11.500Z" fill="#e0a92c"/><path d="M0 4.500Q0 3.500 1 3.500H5.500Q6.300 3.500 6.900 3L8 2H14.500Q16 2 16 3.500V11.500Q16 13 14.500 13H1.500Q0 13 0 11.500Z" fill="url(#gf)"/></svg>
<div class="t" id="n14" style="left:309px;top:504px;letter-spacing:0.05px">debug</div><div class="t" id="d14" style="left:549px;top:504px;color:#e6e6e6;letter-spacing:-0.34px">28/08/2023 23:53</div><div class="t" id="f14" style="left:693.500px;top:504px;color:#e6e6e6;letter-spacing:-0.11px">File folder</div>
<svg style="left:289px;top:524px" width="16" height="13" viewBox="0 0 16 13"><path d="M0 1.500Q0 0 1.500 0H5.200Q6 0 6.600 .6L8 2H14.500Q16 2 16 3.500V11.500Q16 13 14.500 13H1.500Q0 13 0 11.500Z" fill="#e0a92c"/><path d="M0 4.500Q0 3.500 1 3.500H5.500Q6.300 3.500 6.900 3L8 2H14.500Q16 2 16 3.500V11.500Q16 13 14.500 13H1.500Q0 13 0 11.500Z" fill="url(#gf)"/></svg>
<div class="t" id="n15" style="left:309px;top:525px;letter-spacing:0.0px">diagnostics</div><div class="t" id="d15" style="left:549px;top:525px;color:#e6e6e6;letter-spacing:-0.34px">07/05/2022 06:42</div><div class="t" id="f15" style="left:693.500px;top:525px;color:#e6e6e6;letter-spacing:-0.11px">File folder</div>
<svg style="left:289px;top:545px" width="16" height="13" viewBox="0 0 16 13"><path d="M0 1.500Q0 0 1.500 0H5.200Q6 0 6.600 .6L8 2H14.500Q16 2 16 3.500V11.500Q16 13 14.500 13H1.500Q0 13 0 11.500Z" fill="#e0a92c"/><path d="M0 4.500Q0 3.500 1 3.500H5.500Q6.300 3.500 6.900 3L8 2H14.500Q16 2 16 3.500V11.500Q16 13 14.500 13H1.500Q0 13 0 11.500Z" fill="url(#gf)"/></svg>
<div class="t" id="n16" style="left:309px;top:546px;letter-spacing:-0.35px">DiagTrack</div><div class="t" id="d16" style="left:549px;top:546px;color:#e6e6e6;letter-spacing:-0.34px">30/10/2023 18:41</div><div class="t" id="f16" style="left:693.500px;top:546px;color:#e6e6e6;letter-spacing:-0.11px">File folder</div>
<svg style="left:289px;top:566px" width="16" height="13" viewBox="0 0 16 13"><path d="M0 1.500Q0 0 1.500 0H5.200Q6 0 6.600 .6L8 2H14.500Q16 2 16 3.500V11.500Q16 13 14.500 13H1.500Q0 13 0 11.500Z" fill="#e0a92c"/><path d="M0 4.500Q0 3.500 1 3.500H5.500Q6.300 3.500 6.900 3L8 2H14.500Q16 2 16 3.500V11.500Q16 13 14.500 13H1.500Q0 13 0 11.500Z" fill="url(#gf)"/></svg>
<div class="t" id="n17" style="left:309px;top:567px;letter-spacing:-0.01px">DigitalLocker</div><div class="t" id="d17" style="left:549px;top:567px;color:#e6e6e6;letter-spacing:-0.28px">07/05/2022 11:09</div><div class="t" id="f17" style="left:693.500px;top:567px;color:#e6e6e6;letter-spacing:-0.11px">File folder</div>
<svg style="left:291px;top:586.400px" width="13" height="14" viewBox="0 0 13 14"><path d="M1 0H10.500Q11.500 0 11.500 1V8.200L13 10V14H0V1Q0 0 1 0Z" fill="#f7e08c"/><path d="M10.200 10.200L13 10V14H10.200Z" fill="#f3d262"/></svg>
<div class="t" id="n18" style="left:309px;top:588px;letter-spacing:-0.11px">Downloaded Program Files</div><div class="t" id="d18" style="left:549px;top:588px;color:#e6e6e6;letter-spacing:-0.34px">07/05/2022 06:24</div><div class="t" id="f18" style="left:693.500px;top:588px;color:#e6e6e6;letter-spacing:-0.11px">File folder</div>
</div></div>
<!-- scrollbar -->
<div class="a" style="left:1193px;top:192px;width:2px;height:60px;background:#9c9c9c;border-radius:1px"></div>
<!-- STATUS -->
<div class="t" id="st0" style="left:64.500px;top:604px;color:#e0e0e0;letter-spacing:-0.28px">122 items</div>
<div class="a" style="left:124px;top:605px;width:1px;height:11px;background:#d0d0d0"></div>
<div class="t" id="st1" style="left:135px;top:604px;color:#e0e0e0;letter-spacing:-0.13px">1 item selected</div>
<div class="a" style="left:224px;top:605px;width:1px;height:11px;background:#d0d0d0"></div>
<div class="a" style="left:1154px;top:599px;width:22px;height:23px;background:#4c4c4c;border:1px solid #727272"></div>
<svg style="left:1158px;top:606px" width="16" height="11" viewBox="0 0 16 11"><path d="M0 .5H16M0 3.500H16M0 6.500H16M0 9.500H16" stroke="#ececec" stroke-width="1"/></svg>
<svg style="left:1181px;top:604px" width="13" height="12" viewBox="0 0 13 12"><rect x=".6" y=".6" width="10.800" height="8.800" rx="1.600" stroke="#ececec" stroke-width="1.100" fill="none"/><path d="M.1 11.500H11.900" stroke="#ececec" stroke-width="1"/></svg>
<!--SECTIONS-->
</div></div>
</body></html>
